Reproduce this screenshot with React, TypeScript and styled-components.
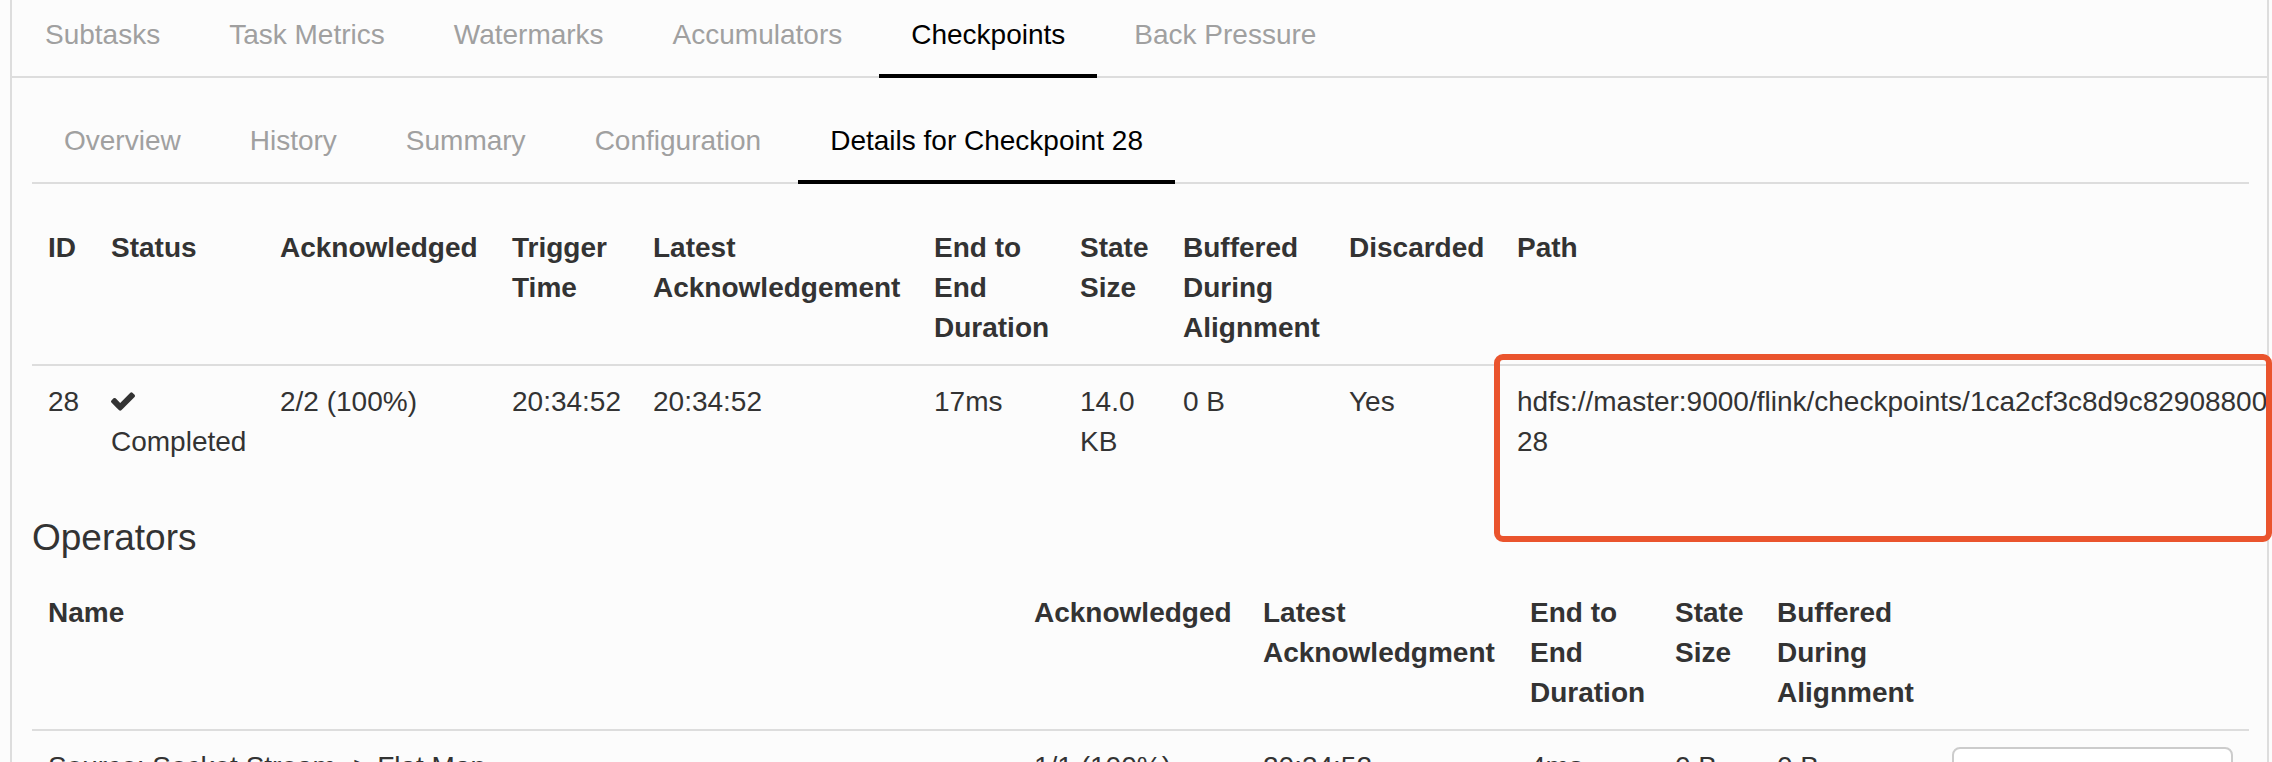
import React from "react";
import styled, { createGlobalStyle } from "styled-components";

const GlobalStyle = createGlobalStyle`
  html, body {
    margin: 0;
    padding: 0;
    overflow: hidden;
    background: #fcfcfc;
  }
  body {
    font-family: "Liberation Sans", Arial, Helvetica, sans-serif;
    color: #333;
    font-size: 28px;
    line-height: 40px;
  }
  *, *::before, *::after { box-sizing: border-box; }
`;

const Page = styled.div`
  position: relative;
  width: 2272px;
  height: 762px;
  overflow: hidden;
  padding: 0 3px 0 10px;
`;

const Panel = styled.div`
  height: 100%;
  border-left: 2px solid #ddd;
  border-right: 2px solid #ddd;
  overflow: hidden;
`;

const TabBar = styled.ul<{ $sub?: boolean }>`
  display: flex;
  align-items: flex-start;
  list-style: none;
  margin: ${(p) => (p.$sub ? "28px 0 0" : "0")};
  padding: 0 0 0 ${(p) => (p.$sub ? "0" : "1px")};
  border-bottom: 2px solid #ddd;
`;

const TabItem = styled.li`
  margin: 0 5px -2px 0;
`;

const TabLink = styled.a<{ $active?: boolean }>`
  display: block;
  padding: 15px 32px 19px;
  font-size: 28px;
  line-height: 40px;
  white-space: nowrap;
  text-decoration: none;
  cursor: pointer;
  color: ${(p) => (p.$active ? "#000" : "#a0a0a0")};
  border-bottom: 4px solid ${(p) => (p.$active ? "#000" : "transparent")};
`;

const Body = styled.div`
  padding: 0 18px 0 20px;
`;

const Table = styled.table<{ $overflow?: boolean }>`
  border-collapse: collapse;
  table-layout: fixed;
  width: ${(p) => (p.$overflow ? "calc(100% + 19px)" : "100%")};
  margin-top: ${(p) => (p.$overflow ? "28px" : "0")};
  color: #333;
`;

const Th = styled.th`
  text-align: left;
  vertical-align: top;
  padding: 16px;
  font-weight: bold;
  font-size: 28px;
  line-height: 40px;
  border-bottom: 2px solid #ddd;
`;

const Td = styled.td`
  text-align: left;
  vertical-align: top;
  padding: 16px;
  font-size: 28px;
  line-height: 40px;
`;

const PathText = styled.span`
  white-space: nowrap;
`;

const CheckIcon = styled.svg`
  width: 24px;
  height: 19px;
  vertical-align: baseline;
  fill: #333;
`;

const SectionTitle = styled.h3`
  margin: 40px 0 18px;
  font-size: 37px;
  line-height: 1.1;
  font-weight: 500;
  color: #333;
`;

const SubtaskButton = styled.button`
  display: block;
  width: 100%;
  height: 64px;
  padding: 12px 24px;
  border: 2px solid #ccc;
  border-radius: 8px;
  background: #fff;
  color: #333;
  font-family: inherit;
  font-size: 28px;
  line-height: 40px;
`;

const Highlight = styled.div`
  position: absolute;
  left: 1494px;
  top: 354px;
  width: 778px;
  height: 188px;
  border: 6px solid #ea542d;
  border-radius: 9px;
  pointer-events: none;
`;

const topTabs = ["Subtasks", "Task Metrics", "Watermarks", "Accumulators", "Checkpoints", "Back Pressure"];
const subTabs = ["Overview", "History", "Summary", "Configuration", "Details for Checkpoint 28"];

const detailCols = [63, 169, 232, 141, 281, 146, 103, 166, 168];
const operatorCols = [986, 229, 267, 145, 102, 175];

const Check = () => (
  <CheckIcon viewBox="121 334 1550 1188" aria-hidden="true">
    <path d="M1671 566q0 40-28 68l-724 724-136 136q-28 28-68 28t-68-28l-136-136-362-362q-28-28-28-68t28-68l136-136q28-28 68-28t68 28l294 295 656-657q28-28 68-28t68 28l136 136q28 28 28 68z" />
  </CheckIcon>
);

export default function App() {
  return (
    <>
      <GlobalStyle />
      <Page>
        <Panel>
          <TabBar>
            {topTabs.map((t) => (
              <TabItem key={t}>
                <TabLink $active={t === "Checkpoints"}>{t}</TabLink>
              </TabItem>
            ))}
          </TabBar>
          <Body>
            <TabBar $sub>
              {subTabs.map((t) => (
                <TabItem key={t}>
                  <TabLink $active={t.startsWith("Details")}>{t}</TabLink>
                </TabItem>
              ))}
            </TabBar>

            <Table $overflow>
              <colgroup>
                {detailCols.map((w, i) => (
                  <col key={i} style={{ width: w }} />
                ))}
                <col />
              </colgroup>
              <thead>
                <tr>
                  <Th>ID</Th>
                  <Th>Status</Th>
                  <Th>Acknowledged</Th>
                  <Th>Trigger Time</Th>
                  <Th>Latest Acknowledgement</Th>
                  <Th>End to End Duration</Th>
                  <Th>State Size</Th>
                  <Th>Buffered During Alignment</Th>
                  <Th>Discarded</Th>
                  <Th>Path</Th>
                </tr>
              </thead>
              <tbody>
                <tr>
                  <Td>28</Td>
                  <Td>
                    <Check /> Completed
                  </Td>
                  <Td>2/2 (100%)</Td>
                  <Td>20:34:52</Td>
                  <Td>20:34:52</Td>
                  <Td>17ms</Td>
                  <Td>14.0 KB</Td>
                  <Td>0 B</Td>
                  <Td>Yes</Td>
                  <Td>
                    <PathText>
                      hdfs://master:9000/flink/checkpoints/1ca2cf3c8d9c82908800e5c7b3a1f4d2/chk-
                      <br />
                      28
                    </PathText>
                  </Td>
                </tr>
              </tbody>
            </Table>

            <SectionTitle>Operators</SectionTitle>

            <Table>
              <colgroup>
                {operatorCols.map((w, i) => (
                  <col key={i} style={{ width: w }} />
                ))}
                <col />
              </colgroup>
              <thead>
                <tr>
                  <Th>Name</Th>
                  <Th>Acknowledged</Th>
                  <Th>Latest Acknowledgment</Th>
                  <Th>End to End Duration</Th>
                  <Th>State Size</Th>
                  <Th>Buffered During Alignment</Th>
                  <Th />
                </tr>
              </thead>
              <tbody>
                <tr>
                  <Td>Source: Socket Stream -&gt; Flat Map</Td>
                  <Td>1/1 (100%)</Td>
                  <Td>20:34:52</Td>
                  <Td>4ms</Td>
                  <Td>0 B</Td>
                  <Td>0 B</Td>
                  <Td>
                    <SubtaskButton>Show Subtasks</SubtaskButton>
                  </Td>
                </tr>
              </tbody>
            </Table>
          </Body>
        </Panel>
        <Highlight />
      </Page>
    </>
  );
}
